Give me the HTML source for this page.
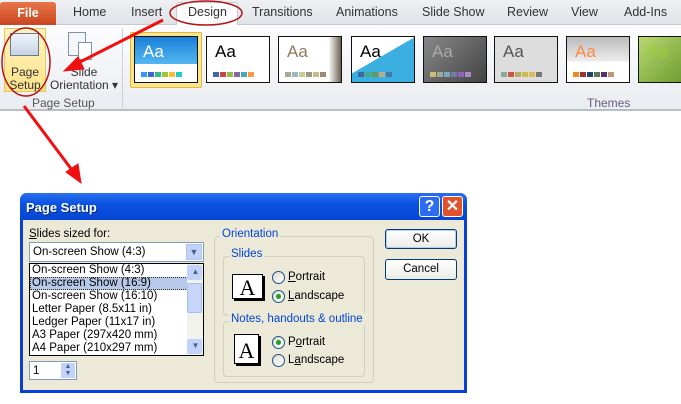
<!DOCTYPE html>
<html><head><meta charset="utf-8"><style>
*{margin:0;padding:0;box-sizing:border-box}
body{width:681px;height:404px;background:#fff;position:relative;overflow:hidden;font-family:"Liberation Sans",sans-serif;}
.abs{position:absolute}
.tabs{left:0;top:0;width:681px;height:25px;background:linear-gradient(#eef0f3,#dfe3e8);border-bottom:1px solid #c5cad2}
.tab{position:absolute;top:5px;font-size:12.5px;color:#333}
.file{left:0;top:2px;width:56px;height:23px;background:linear-gradient(#e8754a,#c9461f);color:#fff;font-size:12.5px;font-weight:bold;text-align:center;line-height:22px;border-radius:3px 3px 0 0}
.ribbon{left:0;top:25px;width:681px;height:86px;background:linear-gradient(#fdfdfe,#e9ecf0);border-bottom:2px solid #b8bec7}
.th{position:absolute;top:36px;width:64px;height:47px;border:1px solid #111;background:#fff;overflow:hidden}
.th span{position:absolute;left:8px;top:5px;font-size:17px}
.sw{position:absolute;left:6px;bottom:5px;display:flex;gap:1px}
.sw i{display:block;width:6px;height:5px}
.dlg{left:20px;top:193px;width:447px;height:200px;background:#0a3fd6;border-radius:7px 7px 0 0}
.title{left:0;top:0;width:447px;height:27px;border-radius:7px 7px 0 0;background:linear-gradient(#2a6ff0,#0a52e0 40%,#0646d3);color:#fff;font-weight:bold;font-size:13px;padding:7px 0 0 6px;text-shadow:1px 1px #0a2a80}
.body{left:3px;top:27px;width:441px;height:170px;background:#ece9d8}
.t11{font-size:11.5px;color:#000}
.list div{height:13px;line-height:13px;padding-left:2px;font-size:11.5px}
.btn{position:absolute;width:72px;height:21px;border:1px solid #003c74;border-radius:3px;background:linear-gradient(#fff,#ecebe6);font-size:11.5px;text-align:center;line-height:19px}
.grp{position:absolute;border:1px solid #d0d0bf;border-radius:4px}
.lg{position:absolute;background:#ece9d8;color:#0046d5;font-size:11.5px;padding:0 2px}
.rad{position:absolute;width:13px;height:13px;border:1px solid #1c5180;border-radius:50%;background:linear-gradient(135deg,#dcdcd6,#fff)}
.rad.on::after{content:"";position:absolute;left:3px;top:3px;width:5px;height:5px;border-radius:50%;background:#21a121}
.page{position:absolute;background:#fff;border:1px solid #000;box-shadow:2px 2px 0 #000;font-family:"Liberation Serif",serif;font-size:22px;text-align:center}
</style></head><body>
<div class="abs tabs">
<div class="abs file">File</div>
<div class="tab" style="left:73px">Home</div>
<div class="tab" style="left:131px">Insert</div>
<div class="abs" style="left:176px;top:2px;width:62px;height:24px;background:#fdfdfe;border:1px solid #c5cad2;border-bottom:none;border-radius:3px 3px 0 0"></div>
<div class="tab" style="left:188px">Design</div>
<div class="tab" style="left:252px">Transitions</div>
<div class="tab" style="left:336px">Animations</div>
<div class="tab" style="left:422px">Slide Show</div>
<div class="tab" style="left:507px">Review</div>
<div class="tab" style="left:571px">View</div>
<div class="tab" style="left:624px">Add-Ins</div>
</div>
<div class="abs ribbon"></div>
<div class="abs" style="left:4px;top:28px;width:42px;height:64px;background:linear-gradient(#fff3c0,#fde38a);border:1px solid #e8c65a"></div>
<div class="abs" style="left:10px;top:33px;width:29px;height:23px;border:1px solid #6a7a90;background:linear-gradient(#eef3fa,#c8d4e4)"></div>
<div class="abs t11" style="left:7px;top:66px;font-size:12px;line-height:13px;text-align:center;width:36px;color:#333">Page Setup</div>
<div class="abs" style="left:68px;top:32px;width:18px;height:24px;border:1px solid #8090a8;background:#f4f6fa"></div>
<div class="abs" style="left:78px;top:42px;width:14px;height:18px;border:1px solid #8090a8;background:#fff"></div>
<div class="abs t11" style="left:48px;top:66px;font-size:12px;line-height:13px;text-align:center;width:72px;color:#333">Slide<br>Orientation ▾</div>
<div class="abs" style="left:32px;top:96px;font-size:12px;color:#555">Page Setup</div>
<div class="abs" style="left:122px;top:28px;width:1px;height:82px;background:#ccd2da"></div>
<div class="abs" style="left:587px;top:96px;font-size:12px;color:#6a5a80">Themes</div>
<div class="abs" style="left:130px;top:32px;width:72px;height:56px;background:#fde58d;border:1px solid #e0b840;border-radius:2px"></div>
<div class="th" style="left:134px;background:linear-gradient(#1b7fd8,#53b8f0 60%,#fff 60%)"><span style="color:#fff">Aa</span><div class="sw"><i style="background:#39f"></i><i style="background:#46c"></i><i style="background:#3b8"></i><i style="background:#9c3"></i><i style="background:#fb3"></i><i style="background:#2cc"></i></div></div>
<div class="th" style="left:206px"><span>Aa</span><div class="sw"><i style="background:#46a"></i><i style="background:#c44"></i><i style="background:#9b4"></i><i style="background:#86a"></i><i style="background:#4ab"></i><i style="background:#f94"></i></div></div>
<div class="th" style="left:278px;background:linear-gradient(90deg,#fff 80%,#6a6050)"><span style="color:#8a7a5a">Aa</span><div class="sw"><i style="background:#aa9"></i><i style="background:#9bb"></i><i style="background:#cc9"></i><i style="background:#998"></i><i style="background:#cb8"></i><i style="background:#987"></i></div></div>
<div class="th" style="left:351px;background:linear-gradient(150deg,#fff 45%,#3bb0e0 45%)"><span>Aa</span><div class="sw"><i style="background:#469"></i><i style="background:#4a8"></i><i style="background:#695"></i><i style="background:#ba8"></i><i style="background:#47a"></i></div></div>
<div class="th" style="left:423px;background:linear-gradient(135deg,#888,#444)"><span style="color:#aaa">Aa</span><div class="sw"><i style="background:#cb7"></i><i style="background:#9a9"></i><i style="background:#7ab"></i><i style="background:#77a"></i><i style="background:#86b"></i><i style="background:#a8c"></i></div></div>
<div class="th" style="left:494px;background:#ddd"><span style="color:#555">Aa</span><div class="sw"><i style="background:#8a9"></i><i style="background:#c54"></i><i style="background:#ba6"></i><i style="background:#cb5"></i><i style="background:#db5"></i><i style="background:#777"></i></div></div>
<div class="th" style="left:566px;background:linear-gradient(#bbb,#eee 55%,#fff 55%)"><span style="color:#f84">Aa</span><div class="sw"><i style="background:#e82"></i><i style="background:#933"></i><i style="background:#246"></i><i style="background:#575"></i><i style="background:#536"></i><i style="background:#b97"></i></div></div>
<div class="th" style="left:638px;width:50px;background:linear-gradient(135deg,#b8d870,#6a9a30)"><span style="color:#9c3">Aa</span></div>

<div class="abs dlg">
<div class="abs title">Page Setup</div>
<div class="abs" style="left:399px;top:3px;width:21px;height:21px;border:1px solid #fff;border-radius:3px;background:#2b6cf0;color:#fff;font-weight:bold;font-size:16px;text-align:center;line-height:19px">?</div>
<div class="abs" style="left:422px;top:3px;width:21px;height:21px;border:1px solid #fff;border-radius:3px;background:#e0522c;color:#fff;font-weight:bold;font-size:16px;text-align:center;line-height:19px">✕</div>
<div class="abs body">
<div class="abs t11" style="left:6px;top:8px"><u>S</u>lides sized for:</div>
<div class="abs" style="left:6px;top:22px;width:175px;height:20px;background:#fff;border:1px solid #7f9db9"><div class="t11" style="padding:3px 0 0 3px">On-screen Show (4:3)</div><div class="abs" style="right:1px;top:1px;width:16px;height:16px;background:#c1d3fb;border:1px solid #b0c4ee;color:#4d6185;font-size:9px;text-align:center;line-height:15px">▼</div></div>
<div class="abs list" style="left:6px;top:43px;width:175px;height:93px;background:#fff;border:1px solid #000">
<div>On-screen Show (4:3)</div>
<div style="background:#b7c9e8;outline:1px dotted #333;outline-offset:-1px;width:158px">On-screen Show (16:9)</div>
<div>On-screen Show (16:10)</div>
<div>Letter Paper (8.5x11 in)</div>
<div>Ledger Paper (11x17 in)</div>
<div>A3 Paper (297x420 mm)</div>
<div>A4 Paper (210x297 mm)</div>
<div class="abs" style="right:0;top:0;width:16px;height:91px;background:#f2f1ec"></div>
<div class="abs" style="right:1px;top:1px;width:15px;height:15px;background:#c1d3fb;border-radius:2px;font-size:8px;color:#4d6185;text-align:center">▲</div>
<div class="abs" style="right:1px;top:19px;width:15px;height:30px;background:#c6d6fb;border:1px solid #a8bce8;border-radius:2px"></div>
<div class="abs" style="right:1px;bottom:1px;width:15px;height:15px;background:#c1d3fb;border-radius:2px;font-size:8px;color:#4d6185;text-align:center">▼</div>
</div>
<div class="abs" style="left:6px;top:141px;width:48px;height:19px;background:#fff;border:1px solid #7f9db9"><span class="t11" style="padding:3px 0 0 3px;display:block">1</span><div class="abs" style="right:1px;top:1px;width:14px;height:15px;background:#c1d3fb;font-size:7px;color:#4d6185;text-align:center;line-height:7px">▲<br>▼</div></div>
<div class="grp" style="left:191px;top:16px;width:160px;height:147px"></div>
<div class="lg" style="left:197px;top:8px">Orientation</div>
<div class="grp" style="left:200px;top:36px;width:142px;height:60px"></div>
<div class="lg" style="left:206px;top:28px">Slides</div>
<div class="page" style="left:209px;top:54px;width:31px;height:25px;line-height:25px">A</div>
<div class="rad" style="left:249px;top:51px"></div><div class="abs t11" style="left:265px;top:51px"><u>P</u>ortrait</div>
<div class="rad on" style="left:249px;top:70px"></div><div class="abs t11" style="left:265px;top:70px"><u>L</u>andscape</div>
<div class="grp" style="left:200px;top:101px;width:142px;height:56px"></div>
<div class="lg" style="left:206px;top:93px">Notes, handouts &amp; outline</div>
<div class="page" style="left:211px;top:114px;width:25px;height:30px;line-height:32px">A</div>
<div class="rad on" style="left:249px;top:116px"></div><div class="abs t11" style="left:265px;top:116px">P<u>o</u>rtrait</div>
<div class="rad" style="left:249px;top:134px"></div><div class="abs t11" style="left:265px;top:134px">L<u>a</u>ndscape</div>
</div>
<div class="btn" style="left:365px;top:36px;height:20px;border-color:#003c74;box-shadow:inset 0 0 0 1px #b6cdf5">OK</div>
<div class="btn" style="left:365px;top:66px">Cancel</div>
</div>

<svg class="abs" style="left:0;top:0" width="681" height="404">
<ellipse cx="206" cy="13" rx="36" ry="12" fill="none" stroke="#b01818" stroke-width="1.5"/>
<ellipse cx="26" cy="62" rx="24" ry="34" fill="none" stroke="#b01818" stroke-width="1.5"/>
<g stroke="#f01010" stroke-width="3" fill="#f01010">
<line x1="163" y1="20" x2="76" y2="64"/>
<polygon points="64,71 78,57 84,69" stroke-width="1"/>
<line x1="24" y1="106" x2="72" y2="170"/>
<polygon points="81,183 66,172 78,164" stroke-width="1"/>
</g>
</svg>
</body></html>
